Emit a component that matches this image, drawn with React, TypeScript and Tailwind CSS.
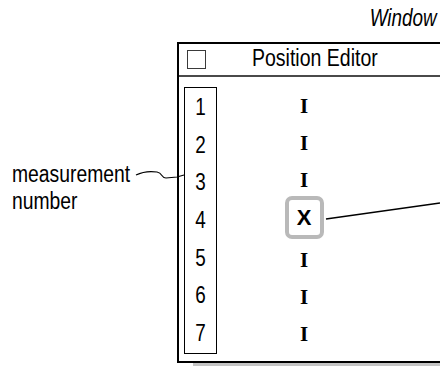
import React from "react";

const rows = ["1", "2", "3", "4", "5", "6", "7"];
const sans = "font-['Liberation_Sans',Arial,sans-serif]";

function Mark({ selected }: { selected: boolean }) {
  if (selected) {
    return (
      <div className="flex h-[43px] w-[39px] shrink-0 -translate-y-[3px] items-center justify-center rounded-[7px] border-[4px] border-[#b9b9b9] bg-white">
        <span className={`${sans} text-[22px] font-bold leading-none text-black`}>X</span>
      </div>
    );
  }
  return (
    <span className="font-['Liberation_Serif','Times_New_Roman',serif] text-[21px] font-bold leading-none text-black">
      I
    </span>
  );
}

export default function App() {
  return (
    <div className={`relative flex h-[366px] w-[440px] flex-col overflow-hidden bg-white text-black ${sans}`}>
      {/* narrow type: arial squeezed horizontally */}
      <div className="flex h-[42px] justify-end pr-[3px] pt-[7px]">
        <span className="inline-block origin-right scale-x-[0.82] text-[23px] italic leading-[23px]">Window</span>
      </div>

      <div className="flex flex-1">
        <div className="w-[177px] shrink-0 pl-[12px] pt-[119px] text-[23px] leading-[27px]">
          <div className="origin-left scale-x-[0.84] whitespace-nowrap">measurement</div>
          <div className="origin-left scale-x-[0.84] whitespace-nowrap">number</div>
        </div>

        <div className="h-[321px] w-[280px] shrink-0 border-2 border-r-0 border-black shadow-[16px_3px_0_0_#c4c4c4]">
          <div className="flex h-[33px] items-center border-b-2 border-[#4a4a4a] pl-[8px]">
            <div className="h-[19px] w-[19px] border-[1.5px] border-[#3a3a3a]" />
            <span className="ml-[46px] inline-block origin-left -translate-y-[1px] scale-x-[0.83] whitespace-nowrap text-[23.5px] leading-none">
              Position Editor
            </span>
          </div>

          <div className="mt-[10px] flex h-[267px] pl-[5px]">
            <div className="flex w-[33px] flex-col border border-black py-[1px]">
              {rows.map((n) => (
                <div key={n} className="flex flex-1 items-center justify-center text-[23px] leading-none">
                  <span className="inline-block scale-x-[0.82]">{n}</span>
                </div>
              ))}
            </div>
            <div className="ml-[64px] flex w-[46px] flex-col py-[1px]">
              {rows.map((n) => (
                <div key={n} className="flex flex-1 items-center justify-center">
                  <Mark selected={n === "4"} />
                </div>
              ))}
            </div>
          </div>
        </div>
      </div>

      <svg
        className="pointer-events-none absolute left-0 top-0"
        width="440"
        height="366"
        viewBox="0 0 440 366"
        fill="none"
      >
        <path
          d="M136 175 C 142 172, 150 171, 157 172 C 163 173, 161 178, 166 178 L 177 177 L 184 175"
          stroke="#000"
          strokeWidth="1.2"
        />
        <path d="M326 219 L 440 203" stroke="#000" strokeWidth="1.5" />
      </svg>
    </div>
  );
}
